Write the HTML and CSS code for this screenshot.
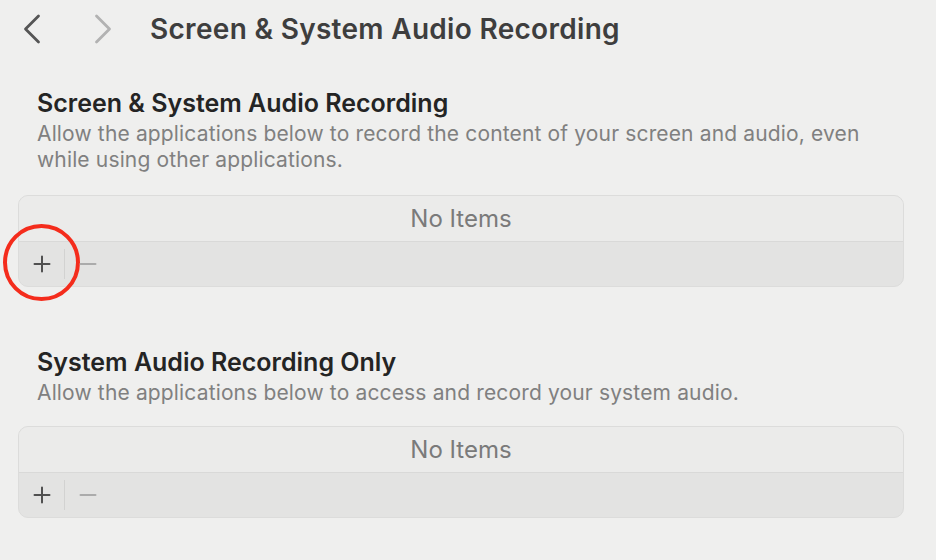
FILE: index.html
```html
<!DOCTYPE html>
<html lang="en">
<head>
    <meta charset="UTF-8">
    <meta name="viewport" content="width=device-width, initial-scale=1.0">
    <title>Screen &amp; System Audio Recording</title>
    <link rel="stylesheet" href="styles.css">
</head>
<body>
    <header class="toolbar">
        <button class="nav-btn back" aria-label="Back">
            <svg width="18" height="30" viewBox="0 0 18 30"><path d="M15.5 2 L2.5 15 L15.5 28" fill="none" stroke="currentColor" stroke-width="2.8" stroke-linecap="round" stroke-linejoin="round"/></svg>
        </button>
        <button class="nav-btn forward" aria-label="Forward" disabled>
            <svg width="18" height="30" viewBox="0 0 18 30"><path d="M2.5 2 L15.5 15 L2.5 28" fill="none" stroke="currentColor" stroke-width="2.8" stroke-linecap="round" stroke-linejoin="round"/></svg>
        </button>
        <h1 class="toolbar-title">Screen &amp; System Audio Recording</h1>
    </header>

    <main class="content">
        <section class="group first">
            <h2 class="group-title">Screen &amp; System Audio Recording</h2>
            <p class="group-desc">Allow the applications below to record the content of your screen and audio, even while using other applications.</p>
            <div class="app-list">
                <div class="app-list-body">No Items</div>
                <div class="app-list-footer">
                    <button class="tool add" aria-label="Add">
                        <svg width="18" height="18" viewBox="0 0 18 18"><path d="M9 1.5 V16.5 M1.5 9 H16.5" stroke="currentColor" stroke-width="2" stroke-linecap="round"/></svg>
                        <span class="highlight"></span>
                    </button>
                    <span class="tool-sep"></span>
                    <button class="tool remove" aria-label="Remove" disabled>
                        <svg width="18" height="18" viewBox="0 0 18 18"><path d="M1.5 9 H16.5" stroke="currentColor" stroke-width="2" stroke-linecap="round"/></svg>
                    </button>
                </div>
            </div>
        </section>

        <section class="group second">
            <h2 class="group-title">System Audio Recording Only</h2>
            <p class="group-desc">Allow the applications below to access and record your system audio.</p>
            <div class="app-list">
                <div class="app-list-body">No Items</div>
                <div class="app-list-footer">
                    <button class="tool add" aria-label="Add">
                        <svg width="18" height="18" viewBox="0 0 18 18"><path d="M9 1.5 V16.5 M1.5 9 H16.5" stroke="currentColor" stroke-width="2" stroke-linecap="round"/></svg>
                    </button>
                    <span class="tool-sep"></span>
                    <button class="tool remove" aria-label="Remove" disabled>
                        <svg width="18" height="18" viewBox="0 0 18 18"><path d="M1.5 9 H16.5" stroke="currentColor" stroke-width="2" stroke-linecap="round"/></svg>
                    </button>
                </div>
            </div>
        </section>
    </main>
</body>
</html>
```

FILE: styles.css
```css
* {
    box-sizing: border-box;
}
body {
    margin: 0;
    background: #efefee;
    font-family: Inter, "Noto Sans", sans-serif;
    color: #242424;
    overflow: hidden;
}
button {
    font: inherit;
    border: none;
    background: none;
    padding: 0;
    cursor: pointer;
}

/* toolbar */
.toolbar {
    height: 58px;
    display: flex;
    align-items: center;
    padding-left: 23px;
}
.nav-btn {
    display: flex;
    align-items: center;
    justify-content: center;
    width: 18px;
    height: 30px;
    color: #555555;
}
.nav-btn.forward {
    margin-left: 53px;
    color: #b2b2b2;
}
.toolbar-title {
    margin: 0 0 0 38px;
    font-size: 28px;
    font-weight: 600;
    color: #3e3e3e;
    letter-spacing: 0.3px;
}

/* groups */
.content {
    padding: 31px 32px 0 18px;
}
.group.second {
    margin-top: 61px;
}
.group-title {
    margin: 0 0 4px 19px;
    font-size: 25px;
    line-height: 28px;
    font-weight: 600;
    color: #242424;
}
.group-desc {
    margin: 0 0 22px 19px;
    font-size: 21px;
    line-height: 26px;
    letter-spacing: 0.15px;
    color: #808080;
    max-width: 840px;
}
.group.second .group-desc {
    margin-bottom: 20px;
}

/* list */
.app-list {
    width: 886px;
    border: 1px solid #dcdcdb;
    border-radius: 10px;
    background: #e3e3e2;
}
.app-list-body {
    height: 46px;
    display: flex;
    align-items: center;
    justify-content: center;
    background: #ebebea;
    border-bottom: 1px solid #d9d9d8;
    border-radius: 9px 9px 0 0;
    font-size: 24px;
    color: #7a7a7a;
}
.app-list-footer {
    height: 44px;
    display: flex;
    align-items: center;
}
.tool {
    position: relative;
    width: 45px;
    height: 30px;
    display: flex;
    align-items: center;
    justify-content: center;
}
.tool.add {
    color: #505050;
}
.tool.remove {
    color: #ababab;
    width: 46px;
}
.tool-sep {
    width: 1px;
    height: 30px;
    background: #d2d2d1;
}

/* red annotation ring */
.highlight {
    position: absolute;
    left: -16px;
    top: -25px;
    width: 77px;
    height: 77px;
    border: 4px solid #f42c1c;
    border-radius: 50%;
    pointer-events: none;
}
```
